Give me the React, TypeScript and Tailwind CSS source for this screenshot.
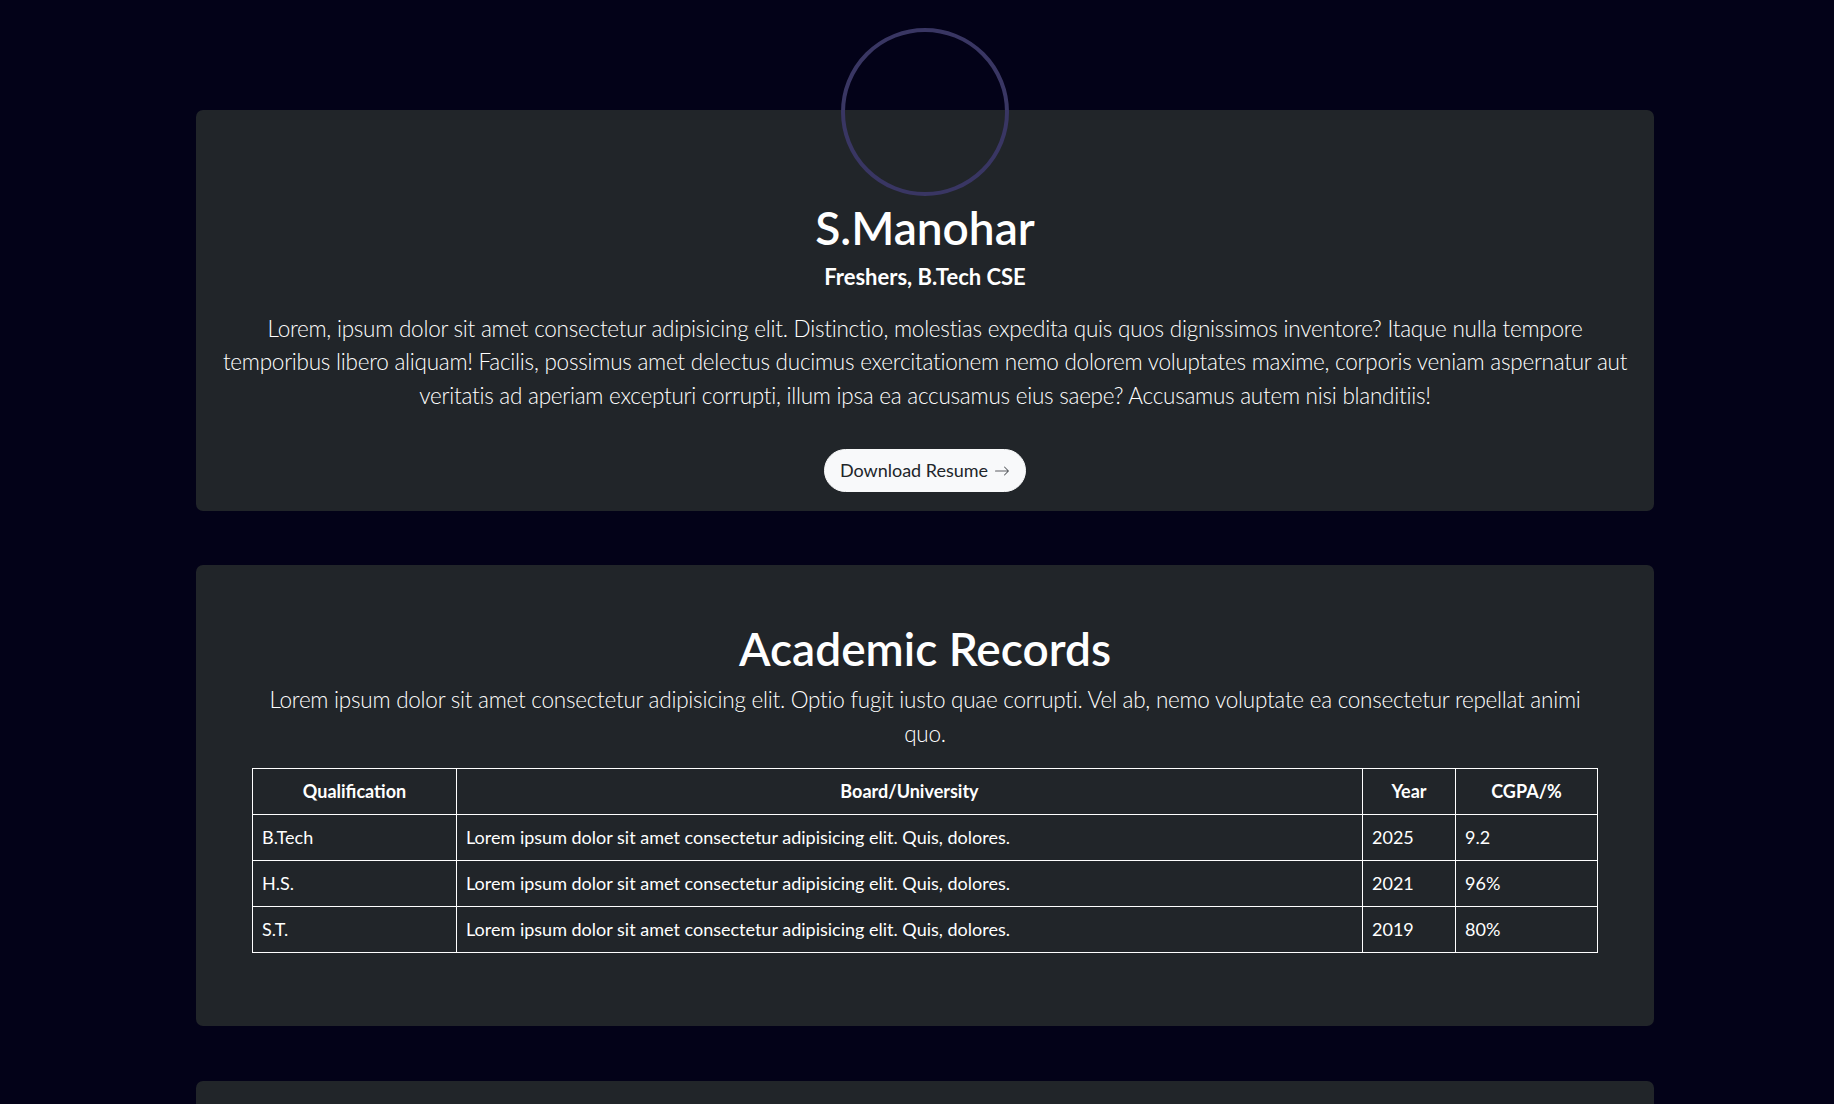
const records = [
  { qualification: "B.Tech", board: "Lorem ipsum dolor sit amet consectetur adipisicing elit. Quis, dolores.", year: "2025", score: "9.2" },
  { qualification: "H.S.", board: "Lorem ipsum dolor sit amet consectetur adipisicing elit. Quis, dolores.", year: "2021", score: "96%" },
  { qualification: "S.T.", board: "Lorem ipsum dolor sit amet consectetur adipisicing elit. Quis, dolores.", year: "2019", score: "80%" },
];

function ArrowRight() {
  return (
    <svg width="16" height="16" viewBox="0 0 16 16" fill="#5c5f63" className="inline-block ml-[6px] -mt-[2px]">
      <path
        fillRule="evenodd"
        d="M1 8a.5.5 0 0 1 .5-.5h11.793l-3.147-3.146a.5.5 0 0 1 .708-.708l4 4a.5.5 0 0 1 0 .708l-4 4a.5.5 0 0 1-.708-.708L13.293 8.5H1.5A.5.5 0 0 1 1 8z"
      />
    </svg>
  );
}

function Profile() {
  return (
    <section className="bg-[#212529] rounded-[7px] px-[24px] pb-[19px] flex flex-col items-center text-center text-white">
      {/* Avatar ring */}
      <div className="w-[168px] h-[168px] -mt-[82px] rounded-full border-4 border-[#393663]" />

      <h1 className="mt-[4px] text-[46px] leading-[1.2] font-semibold">S.Manohar</h1>
      <h5 className="mt-[9px] text-[22px] leading-[1.2] font-bold">Freshers, B.Tech CSE</h5>

      <p className="mt-[21px] text-[22.5px] leading-[1.5] font-light tracking-[-0.25px]">
        Lorem, ipsum dolor sit amet consectetur adipisicing elit. Distinctio, molestias expedita quis quos dignissimos
        inventore? Itaque nulla tempore temporibus libero aliquam! Facilis, possimus amet delectus ducimus
        exercitationem nemo dolorem voluptates maxime, corporis veniam aspernatur aut veritatis ad aperiam excepturi
        corrupti, illum ipsa ea accusamus eius saepe? Accusamus autem nisi blanditiis!
      </p>

      <button className="mt-[36px] h-[43px] px-[15px] rounded-full bg-[#f8f9fa] border border-[#f8f9fa] text-[#212529] text-[18px] leading-[27px]">
        Download Resume
        <ArrowRight />
      </button>
    </section>
  );
}

function AcademicRecords() {
  return (
    <section className="mt-[54px] bg-[#212529] rounded-[7px] px-[56px] pt-[56px] pb-[73px] flex flex-col items-center text-center text-white">
      <h1 className="text-[46px] leading-[1.2] font-semibold">Academic Records</h1>
      <p className="mt-[7px] max-w-[1330px] text-[22.5px] leading-[1.5] font-light tracking-[-0.25px]">
        Lorem ipsum dolor sit amet consectetur adipisicing elit. Optio fugit iusto quae corrupti. Vel ab, nemo voluptate
        ea consectetur repellat animi quo.
      </p>

      <table className="mt-[17px] w-full table-fixed border-collapse border border-white text-[18px] leading-[27px]">
        <thead>
          <tr className="h-[46px]">
            <th className="w-[204px] border border-white px-[9px] font-bold">Qualification</th>
            <th className="border border-white px-[9px] font-bold">Board/University</th>
            <th className="w-[93px] border border-white px-[9px] font-bold">Year</th>
            <th className="w-[142px] border border-white px-[9px] font-bold">CGPA/%</th>
          </tr>
        </thead>
        <tbody>
          {records.map((r) => (
            <tr key={r.qualification} className="h-[46px] text-left">
              <td className="border border-white px-[9px]">{r.qualification}</td>
              <td className="border border-white px-[9px]">{r.board}</td>
              <td className="border border-white px-[9px]">{r.year}</td>
              <td className="border border-white px-[9px]">{r.score}</td>
            </tr>
          ))}
        </tbody>
      </table>
    </section>
  );
}

export default function App() {
  return (
    <div className="min-h-screen bg-[#030218] pt-[110px] pb-[60px] pl-[196px] font-['Lato',sans-serif]">
      <div className="w-[1458px]">
        <Profile />
        <AcademicRecords />
        {/* Next section, cut by the fold */}
        <section className="mt-[55px] h-[320px] bg-[#212529] rounded-[7px]" />
      </div>
    </div>
  );
}
